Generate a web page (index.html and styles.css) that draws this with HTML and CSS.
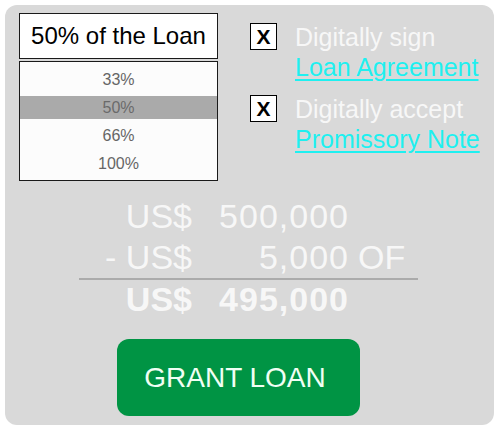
FILE: index.html
```html
<!DOCTYPE html>
<html>
<head>
<meta charset="utf-8">
<link rel="stylesheet" href="styles.css">
</head>
<body>
<div class="panel">
  <div class="top">
    <div class="picker">
      <div class="select">50% of the Loan</div>
      <ul class="options">
        <li class="opt">33%</li>
        <li class="opt selected">50%</li>
        <li class="opt">66%</li>
        <li class="opt">100%</li>
      </ul>
    </div>
    <div class="checks">
      <div class="check">
        <div class="box">X</div>
        <div class="label">Digitally sign<br><a class="link" href="#">Loan Agreement</a></div>
      </div>
      <div class="check second">
        <div class="box">X</div>
        <div class="label">Digitally accept<br><a class="link" href="#">Promissory Note</a></div>
      </div>
    </div>
  </div>
  <div class="amounts">
    <div class="row">
      <span class="cur">US$</span><span class="num">500,000</span><span class="suf"></span>
    </div>
    <div class="row minus">
      <span class="cur">- US$</span><span class="num">5,000</span><span class="suf">OF</span>
    </div>
    <div class="row total">
      <span class="cur">US$</span><span class="num">495,000</span><span class="suf"></span>
    </div>
  </div>
  <button class="grant">GRANT LOAN</button>
</div>
</body>
</html>
```
FILE: styles.css
```css
html, body {
  margin: 0;
  padding: 0;
  background: #ffffff;
}
body {
  font-family: "Liberation Sans", Arial, sans-serif;
}
.panel {
  margin: 5px 0 0 5px;
  width: 489px;
  height: 420px;
  box-sizing: border-box;
  background: #d9d9d9;
  border-radius: 12px;
  padding: 8px 0 0 14px;
}
.top {
  display: flex;
  gap: 32px;
}
.picker {
  width: 199px;
}
.select {
  height: 46px;
  box-sizing: border-box;
  border: 1px solid #1a1a1a;
  background: #ffffff;
  color: #000;
  font-size: 24px;
  line-height: 44px;
  text-align: center;
}
.options {
  list-style: none;
  margin: 2px 0 0 0;
  padding: 6px 0 5px 0;
  border: 1px solid #1a1a1a;
  background: #fcfcfc;
  display: flex;
  flex-direction: column;
  gap: 5px;
}
.opt {
  height: 23px;
  line-height: 23px;
  font-size: 16px;
  color: #666;
  text-align: center;
}
.opt.selected {
  background: #aaaaaa;
  color: #6a6a6a;
}
.checks {
  margin-top: 9px;
}
.check {
  display: flex;
  align-items: flex-start;
  gap: 18px;
}
.check.second {
  margin-top: 12px;
}
.box {
  width: 27px;
  height: 27px;
  box-sizing: border-box;
  margin-top: 1px;
  border: 1px solid #000;
  background: #fff;
  color: #000;
  font-weight: bold;
  font-size: 21px;
  line-height: 25px;
  text-align: center;
}
.label {
  font-size: 25px;
  line-height: 30px;
  color: #f7f7f7;
}
.link {
  color: #1ef0f0;
  text-decoration: underline;
  text-underline-offset: 3px;
  text-decoration-thickness: 2px;
}
.amounts {
  margin: 15px 0 0 60px;
  width: 339px;
  color: #f7f7f7;
  font-size: 34px;
}
.row {
  display: grid;
  grid-template-columns: 113px 157px 1fr;
  line-height: 41px;
}
.row.minus {
  border-bottom: 2px solid #ababab;
}
.row.total {
  font-weight: bold;
  line-height: 38px;
}
.cur {
  text-align: right;
}
.num {
  text-align: right;
  letter-spacing: 1px;
}
.suf {
  padding-left: 9px;
}
.grant {
  display: block;
  margin: 21px 0 0 98px;
  width: 243px;
  height: 77px;
  border: none;
  border-radius: 12px;
  background: #009444;
  color: #f0fff4;
  font-family: "Liberation Sans", Arial, sans-serif;
  font-size: 28px;
  padding: 0 7px 0 0;
}
```
